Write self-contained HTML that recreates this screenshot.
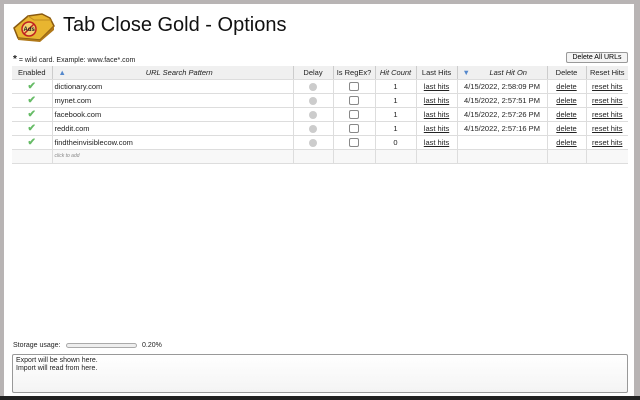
<!DOCTYPE html>
<html><head><meta charset="utf-8"><style>
*{margin:0;padding:0;box-sizing:border-box}
body{width:640px;height:400px;background:#b8b4b4;font-family:"Liberation Sans",sans-serif;position:relative;overflow:hidden}
#main{position:absolute;left:4px;top:4px;width:630px;height:392px;background:#fff}
#bar{position:absolute;left:0;top:396px;width:640px;height:4px;background:#222}
.t{position:absolute;left:63px;top:14px;font-size:20px;color:#111}
.s{font-size:7px;color:#222;position:absolute}
table{position:absolute;left:12px;top:66px;width:616px;border-collapse:collapse;font-size:7.5px;color:#222}
td,th{height:14px;border-right:1px solid #ddd;border-bottom:1px solid #ddd;text-align:center;font-weight:normal;padding:0}
th{background:#f0f0f0;height:13px;border-right:1px solid #ccc}
td.l,th.l{text-align:left;padding-left:2px}
tr td:last-child,tr th:last-child{border-right:none}
.i{font-style:italic}
a{color:#222;text-decoration:underline}
.cb{display:inline-block;width:10px;height:9px;border:1px solid #888;border-radius:2px;vertical-align:middle}
.dot{display:inline-block;width:8px;height:8px;border-radius:50%;background:#ccc;vertical-align:middle}
.chk{color:#6b6;font-size:10px;font-weight:bold}
.add td{background:#f8f8f8}
</style></head><body>
<div id="main"></div><div id="bar"></div>
<svg style="position:absolute;left:12px;top:10px" width="44" height="32" viewBox="0 0 44 32">
<path d="M2 18 L16 6 L30 4 L38 8 L42 16 L28 30 L6 28 Z" fill="#e8b530" stroke="#8a5a10" stroke-width="1.5"/>
<path d="M16 6 L22 10 L40 10" fill="none" stroke="#c08a20" stroke-width="1"/>
<path d="M6 28 L28 30 L42 16 L42 20 L28 32 L6 30 Z" fill="#b07818"/>
<circle cx="17" cy="19" r="7" fill="#f4d070" stroke="#c02020" stroke-width="1.5"/>
<line x1="12" y1="24" x2="22" y2="14" stroke="#c02020" stroke-width="1.5"/>
<text x="11.5" y="21" font-size="6" font-family="Liberation Sans" font-weight="bold" fill="#222">Ads</text>
</svg>
<div class="t">Tab Close Gold - Options</div>
<div class="s" style="left:13px;top:54px"><b style="font-size:10px">*</b> = wild card. Example: www.face*.com</div>
<div style="position:absolute;left:566px;top:52px;width:62px;height:11px;border:1px solid #999;border-radius:2px;background:#f4f4f4;font-size:7px;text-align:center;line-height:9px">Delete All URLs</div>
<table>
<tr><th style="width:40px">Enabled</th><th class="i" style="width:241px"><span style="float:left;color:#58c;padding-left:6px">▲</span>URL Search Pattern</th><th style="width:40px">Delay</th><th style="width:42px">Is RegEx?</th><th class="i" style="width:41px">Hit Count</th><th style="width:41px">Last Hits</th><th class="i" style="width:90px"><span style="float:left;color:#58c;padding-left:5px">▼</span>Last Hit On</th><th style="width:39px">Delete</th><th>Reset Hits</th></tr>
<tr><td class="chk">✔</td><td class="l">dictionary.com</td><td><span class="dot"></span></td><td><span class="cb"></span></td><td>1</td><td><a>last hits</a></td><td>4/15/2022, 2:58:09 PM</td><td><a>delete</a></td><td><a>reset hits</a></td></tr>
<tr><td class="chk">✔</td><td class="l">mynet.com</td><td><span class="dot"></span></td><td><span class="cb"></span></td><td>1</td><td><a>last hits</a></td><td>4/15/2022, 2:57:51 PM</td><td><a>delete</a></td><td><a>reset hits</a></td></tr>
<tr><td class="chk">✔</td><td class="l">facebook.com</td><td><span class="dot"></span></td><td><span class="cb"></span></td><td>1</td><td><a>last hits</a></td><td>4/15/2022, 2:57:26 PM</td><td><a>delete</a></td><td><a>reset hits</a></td></tr>
<tr><td class="chk">✔</td><td class="l">reddit.com</td><td><span class="dot"></span></td><td><span class="cb"></span></td><td>1</td><td><a>last hits</a></td><td>4/15/2022, 2:57:16 PM</td><td><a>delete</a></td><td><a>reset hits</a></td></tr>
<tr><td class="chk">✔</td><td class="l">findtheinvisiblecow.com</td><td><span class="dot"></span></td><td><span class="cb"></span></td><td>0</td><td><a>last hits</a></td><td></td><td><a>delete</a></td><td><a>reset hits</a></td></tr>
<tr class="add"><td></td><td class="l i" style="font-size:5px;color:#888">click to add</td><td></td><td></td><td></td><td></td><td></td><td></td><td></td></tr>
</table>
<div class="s" style="left:13px;top:342px">Storage usage:</div>
<div style="position:absolute;left:66px;top:343px;width:71px;height:5px;border:1px solid #aaa;border-radius:3px;background:#eee"></div>
<div class="s" style="left:142px;top:342px">0.20%</div>
<div style="position:absolute;left:12px;top:354px;width:616px;height:39px;border:1px solid #999;border-radius:2px;font-size:7px;padding:2px 3px;line-height:8px;color:#222;background:linear-gradient(#fff,#f4f4f4)">Export will be shown here.<br>Import will read from here.</div>
</body></html>
